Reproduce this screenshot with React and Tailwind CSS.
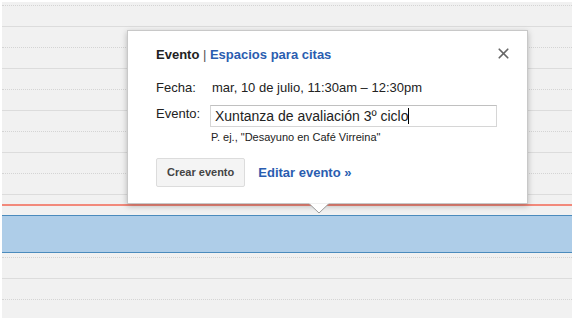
import { X } from 'lucide-react';

const rows = Array.from({ length: 15 }, (_, i) => (i % 2 === 0 ? 'solid' : 'dotted'));

const EventPopup = () => {
  return (
    <div className="absolute left-[127px] top-[30px] w-[401px] h-[174px] bg-white border border-[#c8c8c8] shadow-[0_2px_6px_rgba(0,0,0,0.25)] z-10">
      {/* Header */}
      <div className="flex items-start justify-between pl-[28px] pr-[15px] pt-[15px]">
        <div className="text-[13px] font-bold leading-[18px]">
          <span className="text-[#222]">Evento</span>
          <span className="text-[#555] font-normal"> | </span>
          <span className="text-[#2a5db0]">Espacios para citas</span>
        </div>
        <button className="-mt-[1px] text-[#666]" aria-label="Cerrar">
          <X size={17} strokeWidth={2.4} />
        </button>
      </div>

      {/* Body */}
      <div className="pl-[28px] pr-[30px] pt-[15px] text-[13px] text-[#222]">
        <div className="flex leading-[18px]">
          <span className="w-[56px]">Fecha:</span>
          <span>mar, 10 de julio, 11:30am – 12:30pm</span>
        </div>
        <div className="flex mt-[8px]">
          <span className="w-[55px] leading-[18px]">Evento:</span>
          <div>
            <div className="w-[287px] h-[22px] border border-[#d6d6d6] border-t-[#c0c0c0] flex items-center px-[4px] text-[14px] leading-[18px]">
              <span>Xuntanza de avaliación 3º ciclo</span>
              <span className="w-px h-[16px] bg-black" />
            </div>
            <div className="text-[11px] leading-[14px] mt-[3px] pl-[1px]">P. ej., "Desayuno en Café Virreina"</div>
          </div>
        </div>
        <div className="flex items-center mt-[14px]">
          <button className="h-[29px] px-[10px] bg-[#f4f4f4] border border-[#dcdcdc] rounded-[2px] text-[11px] font-bold text-[#444]">
            Crear evento
          </button>
          <span className="ml-[13px] text-[13px] font-bold text-[#2a5db0]">Editar evento »</span>
        </div>
      </div>

      {/* Tail */}
      <svg className="absolute left-[181px] top-[172px]" width="20" height="11" viewBox="0 0 20 11">
        <path d="M0 0.5 L10 10 L20 0.5" fill="white" stroke="#9a9a9a" strokeWidth="1" />
        <rect x="0" y="-1" width="20" height="1.5" fill="white" />
      </svg>
    </div>
  );
};

export default function App() {
  return (
    <div className="relative w-[574px] h-[320px] overflow-hidden bg-white p-[2px] font-['Liberation_Sans',Arial,sans-serif]">
      <div className="relative h-full bg-[#f1f1f1]">
        <div className="h-[4px] border-b border-dotted border-[#d4d4d4]" />
        {rows.map((kind, i) => (
          <div
            key={i}
            className={
              kind === 'solid'
                ? 'h-[21px] border-b border-[#dcdcdc]'
                : 'h-[21px] border-b border-dotted border-[#d4d4d4]'
            }
          />
        ))}

        {/* Current time line */}
        <div className="absolute left-0 right-0 top-[202px] h-[2px] bg-[#f2897b]" />

        {/* Selected slot */}
        <div className="absolute left-0 right-0 top-[213px] h-[38px] bg-[#aecde8] border-y border-[#4b8bbd]" />

        <div className="absolute -left-[2px] -top-[2px]">
          <EventPopup />
        </div>
      </div>
    </div>
  );
}
